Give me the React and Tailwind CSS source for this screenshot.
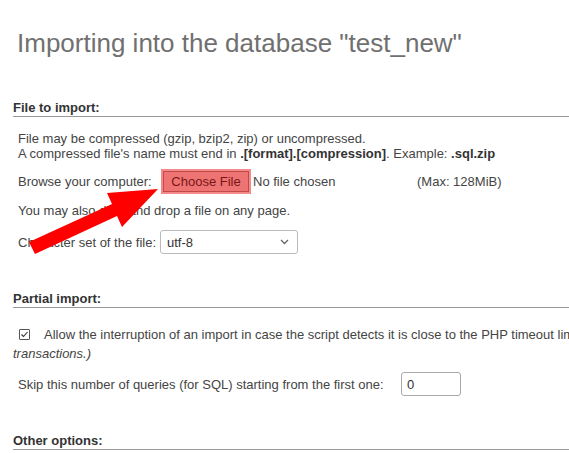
import React from 'react';

const SectionHeader = ({ children, className = '' }) => (
  <div className={`font-bold text-[#333] leading-[15px] border-b border-[#999] pb-[1px] ${className}`}>
    {children}
  </div>
);

const Chevron = () => (
  <svg width="9" height="6" viewBox="0 0 9 6" fill="none">
    <path d="M1 1l3.5 3.5L8 1" stroke="#666" strokeWidth="1.3" />
  </svg>
);

const Arrow = () => (
  <svg
    className="absolute left-0 top-0 pointer-events-none"
    width="569"
    height="453"
    viewBox="0 0 569 453"
  >
    <polygon
      points="29,242 112,204 107,193 158,189 122,227 117,216 35,254"
      fill="#ff0000"
    />
  </svg>
);

const App = () => {
  return (
    <div className="relative w-[569px] h-[453px] overflow-hidden bg-white font-['Liberation_Sans',Arial,sans-serif] text-[13px] text-[#444]">
      <div className="w-[800px]">
        <h2 className="pl-[17px] pt-[28px] text-[26px] leading-[30px] font-normal text-[#707070]">
          Importing into the database "test_new"
        </h2>

        {/* File to import */}
        <div className="ml-[13px] mt-[42px]">
          <SectionHeader>File to import:</SectionHeader>
          <div className="pl-[5px]">
            <div className="mt-[14px] leading-[15px]">
              File may be compressed (gzip, bzip2, zip) or uncompressed.
              <br />
              A compressed file's name must end in <b className="text-[#333]">.[format].[compression]</b>. Example: <b className="text-[#333]">.sql.zip</b>
            </div>

            <div className="mt-[8px] flex items-center h-[25px] leading-[15px]">
              <span className="w-[143px]">Browse your computer:</span>
              <span className="w-[90px] h-[25px] bg-[#f38a8a] p-[2px] flex">
                <span className="flex-1 border border-[#c24a4a] bg-[#ee7474] flex items-center justify-center text-[#7a1414]">
                  Choose File
                </span>
              </span>
              <span className="ml-[2px] w-[164px]">No file chosen</span>
              <span>(Max: 128MiB)</span>
            </div>

            <div className="mt-[9px] leading-[15px]">
              You may also drag and drop a file on any page.
            </div>

            <div className="mt-[12px] flex items-center h-[24px] leading-[15px]">
              <span className="w-[142px]">Character set of the file:</span>
              <span className="w-[138px] h-[24px] border border-[#bbb] rounded-[3px] pl-[6px] pr-[8px] flex items-center justify-between text-[#333]">
                utf-8
                <Chevron />
              </span>
            </div>
          </div>
        </div>

        {/* Partial import */}
        <div className="ml-[13px] mt-[37px]">
          <SectionHeader>Partial import:</SectionHeader>
          <div className="mt-[17px] flex items-center h-[19px] leading-[15px] whitespace-nowrap">
            <span className="ml-[6px] w-[11px] h-[11px] border border-[#555] rounded-[1px] flex items-center justify-center">
              <svg width="9" height="9" viewBox="0 0 9 9" fill="none">
                <path d="M1.5 4.5l2 2L7.5 2" stroke="#333" strokeWidth="1.1" />
              </svg>
            </span>
            <span className="ml-[14px]">
              Allow the interruption of an import in case the script detects it is close to the PHP timeout limit. <i>(This might be a good way to import large files, however it can break</i>
            </span>
          </div>
          <div className="mt-[2px] leading-[15px] italic">transactions.)</div>

          <div className="mt-[11px] pl-[5px] flex items-center h-[24px] leading-[15px]">
            <span className="w-[383px]">Skip this number of queries (for SQL) starting from the first one:</span>
            <span className="w-[60px] h-[24px] border border-[#aaa] rounded-[3px] pl-[5px] flex items-center text-[#333]">
              0
            </span>
          </div>
        </div>

        {/* Other options */}
        <div className="ml-[13px] mt-[37px]">
          <SectionHeader>Other options:</SectionHeader>
        </div>
      </div>

      <Arrow />
    </div>
  );
};

export default App;
